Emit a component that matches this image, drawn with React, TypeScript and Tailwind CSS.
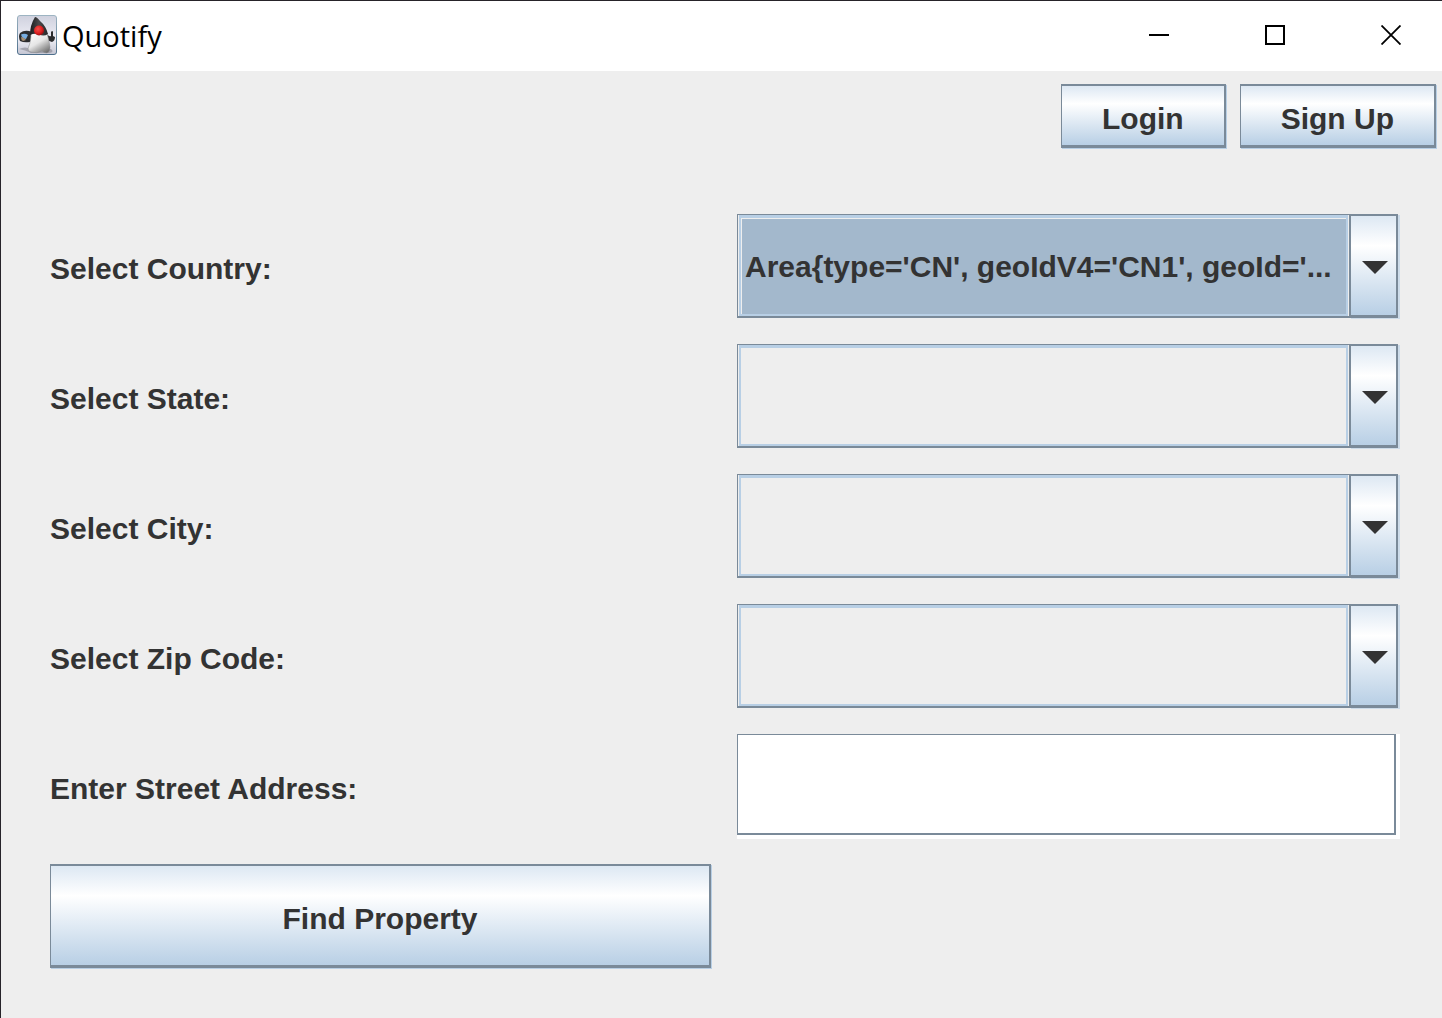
import type { ReactNode } from "react";

function DukeIcon() {
  return (
    <svg width="40" height="40" viewBox="0 0 40 40" aria-hidden="true" className="shrink-0">
      <defs>
        <linearGradient id="tile" x1="0" y1="0" x2="0" y2="1">
          <stop offset="0" stopColor="#cfd1de" />
          <stop offset="0.6" stopColor="#eeeef6" />
          <stop offset="1" stopColor="#c4c5d2" />
        </linearGradient>
        <linearGradient id="frame" x1="0" y1="0" x2="0" y2="1">
          <stop offset="0" stopColor="#9db4c2" />
          <stop offset="1" stopColor="#4d6f8c" />
        </linearGradient>
        <linearGradient id="belly" x1="0.2" y1="0" x2="0.8" y2="1">
          <stop offset="0" stopColor="#ffffff" />
          <stop offset="0.5" stopColor="#e6e6e6" />
          <stop offset="1" stopColor="#6f6f6f" />
        </linearGradient>
        <linearGradient id="head" x1="0" y1="0" x2="1" y2="0">
          <stop offset="0" stopColor="#1c1c1e" />
          <stop offset="0.5" stopColor="#4a4a4c" />
          <stop offset="1" stopColor="#242426" />
        </linearGradient>
        <radialGradient id="nose" cx="0.4" cy="0.35" r="0.7">
          <stop offset="0" stopColor="#f4504c" />
          <stop offset="0.6" stopColor="#dc2020" />
          <stop offset="1" stopColor="#8c0c10" />
        </radialGradient>
      </defs>
      <rect x="0.5" y="0.5" width="39" height="39" rx="2.5" fill="url(#tile)" stroke="url(#frame)" />
      <path d="M2 34 Q8 31 14 34 L34 34 Q38 37 32 38 L14 38 Q8 35 2 34 Z" fill="#85868f" opacity="0.6" />
      <path d="M15 17 Q8 14 3 18 Q1 21 3 26 Q7 28 13 27 L15 24 Z" fill="#2c2c2e" />
      <path d="M4 19.500 Q8 18 11 20 L9 24 Q5 24 4 19.500 Z" fill="#78ade0" />
      <path d="M4 22 Q7 22 9 25 L6 26 Q4 25 4 22 Z" fill="#a58e73" />
      <path d="M29 18 Q31 22 34 21 L34 17 Q35.500 15 36 17 L36 21 L38 22 Q38 26 35 27 Q32 26 30 25 Z" fill="#2c2c2e" />
      <path d="M14 17 Q20 15 30 18 Q32 25 33 32 Q33 37 30 38 Q27 38 25 36 Q20 39 14 37 Q10 36 11.500 32 Q14 27 14 17 Z" fill="url(#belly)" stroke="#8a8a8e" strokeWidth="0.5" />
      <path d="M18 2 Q20 2 23 6 Q29 11 31 19 Q26 22 22 19 Q17 18 13 20 Q13 10 18 2 Z" fill="url(#head)" />
      <circle cx="22" cy="15.500" r="5" fill="url(#nose)" />
    </svg>
  );
}

function MetalButton({ className, children }: { className: string; children: ReactNode }) {
  return (
    <button
      type="button"
      className={`border-t-2 border-r-2 border-b-3 border-l border-[#7a8a99] bg-linear-to-b from-[#dde8f3] via-white via-30% to-[#b8cfe5] text-center shadow-[1px_1px_0_#b8cfe5] ${className}`}
    >
      {children}
    </button>
  );
}

function ComboRow({ id, label, value }: { id: string; label: string; value?: string }) {
  return (
    <>
      <label htmlFor={id} className="self-center pt-1">
        {label}
      </label>
      <div className="relative mb-0.5 flex pr-0.5">
        <div className="flex min-w-0 flex-1 border-t border-r-2 border-b-2 border-l border-[#7a8a99] pl-px">
          <select
            id={id}
            className={`min-w-0 flex-1 appearance-none truncate border-2 border-t-3 border-[#b8cfe5] pt-0.5 pr-14 pl-1 outline-none ${
              value ? "bg-[#a3b8cc] shadow-[inset_1px_1px_0_#eeeeee]" : "bg-[#eeeeee]"
            }`}
          >
            <option>{value ?? ""}</option>
          </select>
        </div>
        <div aria-hidden="true" className="pointer-events-none absolute inset-y-0 right-0.5 flex">
          <span className="mt-px mb-0.5 w-[3px] border-r border-[#eeeeee] bg-[#b8cfe5]" />
          <span className="flex w-[49px] items-center justify-center border-2 border-b-3 border-[#7a8a99] bg-linear-to-b from-[#dde8f3] via-white via-30% to-[#b8cfe5] pt-1 pl-0.5 shadow-[2px_1px_0_#cddcea]">
            <svg width="26" height="13" viewBox="0 0 26 13">
              <path d="M0 0 H26 L13 13 Z" fill="#333333" />
            </svg>
          </span>
        </div>
      </div>
    </>
  );
}

export default function App() {
  return (
    <div className="flex min-h-screen flex-col border-t border-l border-[#262329] bg-[#eeeeee] font-['Liberation_Sans',Arial,sans-serif] text-[30px] leading-9 font-bold text-[#333333]">
      <header className="flex h-[70px] items-center bg-white pb-0.5 pl-4">
        <DukeIcon />
        <h1 className="ml-[5px] flex-1 pt-0.5 font-['Open_Sans','Noto_Sans',sans-serif] text-[29px] font-normal text-black">
          Quotify
        </h1>
        <div className="flex self-stretch">
          <button type="button" aria-label="Minimize" className="flex w-[116px] items-center justify-center">
            <svg width="20" height="20" viewBox="0 0 20 20">
              <path d="M0 10 H20" stroke="#000000" strokeWidth="2" />
            </svg>
          </button>
          <button type="button" aria-label="Maximize" className="flex w-[116px] items-center justify-center">
            <svg width="20" height="20" viewBox="0 0 20 20">
              <path d="M1 1 H19 V19 H1 Z" fill="none" stroke="#000000" strokeWidth="2" />
            </svg>
          </button>
          <button type="button" aria-label="Close" className="flex w-[109px] items-center justify-center pl-1.5">
            <svg width="20" height="20" viewBox="0 0 20 20">
              <path d="M0.500 0.500 L19.500 19.500 M19.500 0.500 L0.500 19.500" stroke="#000000" strokeWidth="1.800" />
            </svg>
          </button>
        </div>
      </header>

      <nav className="flex justify-end gap-3.5 pt-[13px] pr-1.5">
        <MetalButton className="h-16 px-10 pt-1.5">Login</MetalButton>
        <MetalButton className="h-16 px-10 pt-1.5">Sign Up</MetalButton>
      </nav>

      <form className="mt-[66px] grid auto-rows-[106px] grid-cols-2 gap-6 pr-[42px] pb-6 pl-[49px]">
        <ComboRow id="country" label="Select Country:" value="Area{type='CN', geoIdV4='CN1', geoId='..." />
        <ComboRow id="state" label="Select State:" />
        <ComboRow id="city" label="Select City:" />
        <ComboRow id="zip" label="Select Zip Code:" />
        <label htmlFor="street" className="self-center pt-1">
          Enter Street Address:
        </label>
        <div className="mb-px flex bg-white pr-1 pb-1">
          <input
            id="street"
            type="text"
            className="min-w-0 flex-1 border-t border-r-2 border-b-2 border-l border-[#7a8a99] bg-white px-1 outline-none"
          />
        </div>
        <MetalButton className="mr-0.5 mb-0.5 pt-1.5">Find Property</MetalButton>
      </form>
    </div>
  );
}
